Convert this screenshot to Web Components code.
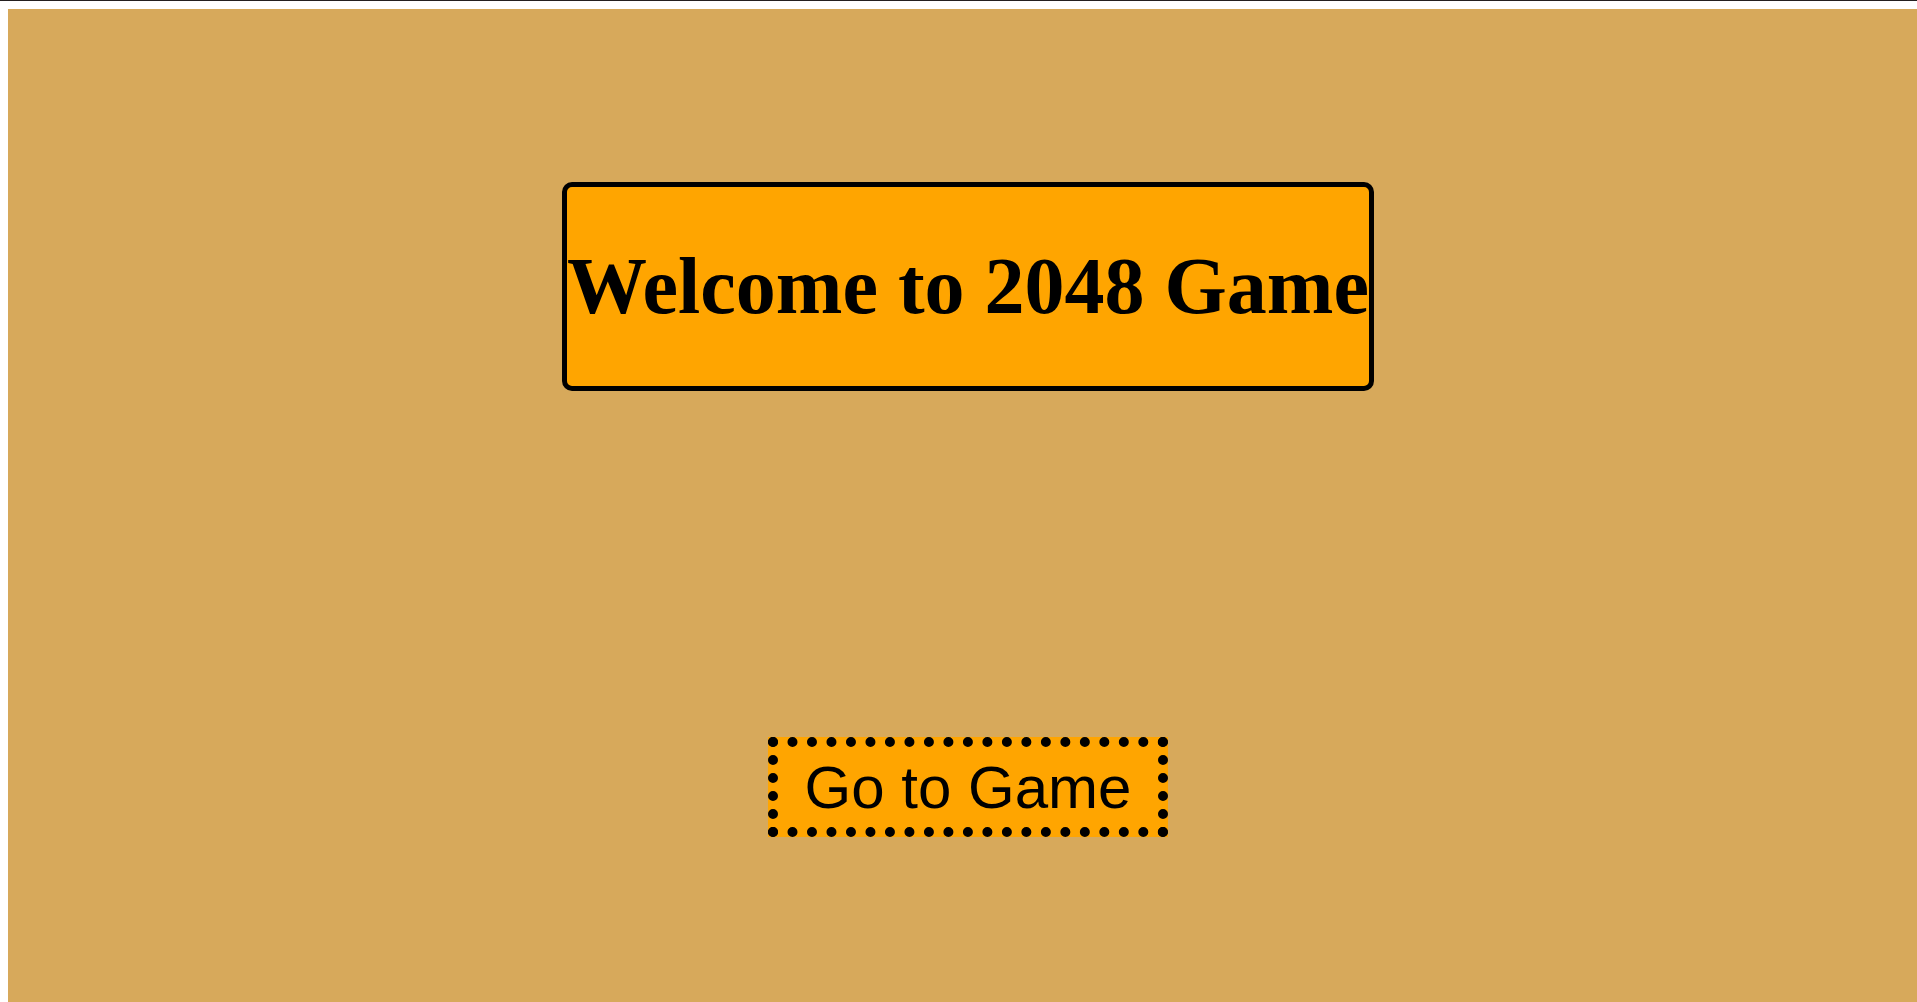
<!DOCTYPE html>
<html lang="en">
<head>
<meta charset="utf-8">
<title>2048 Game</title>
<style>
html { background: #fff; height: 100%; overflow: hidden; }
body { margin: 0; height: 100%; }
</style>
</head>
<body>
<welcome-page>
  <game-title>Welcome to 2048 Game</game-title>
  <start-button>Go to Game</start-button>
</welcome-page>
<script>
class WelcomePage extends HTMLElement {
  constructor() {
    super();
    this.attachShadow({ mode: "open" }).innerHTML = `
      <style>
        :host { display: block; box-sizing: border-box; min-height: 100vh; border-top: 1px solid #231f20; padding: 8px 0 0 8px; color: #000; }
        main { display: flex; flex-direction: column; align-items: center; gap: 346px; box-sizing: border-box; width: calc(100vw + 3px); min-height: calc(100vh - 9px); padding-top: 173px; background: #d7a95b; }
      </style>
      <main><slot></slot></main>`;
  }
}
class GameTitle extends HTMLElement {
  constructor() {
    super();
    this.attachShadow({ mode: "open" }).innerHTML = `
      <style>
        :host { display: flow-root; border: 5px solid #000; border-radius: 10px; background: #ffa500; }
        h1 { margin: 53px 0 54px; font: bold 80px/92px "Liberation Serif", serif; white-space: nowrap; }
      </style>
      <h1><slot></slot></h1>`;
  }
}
class StartButton extends HTMLElement {
  constructor() {
    super();
    this.attachShadow({ mode: "open" }).innerHTML = `
      <style>
        :host { display: block; }
        button { display: block; box-sizing: border-box; width: 400px; height: 100px; padding: 0; border: 10px dotted #000; background: #ffa500; color: #000; font: 60px "Liberation Sans", Arial, sans-serif; cursor: pointer; }
      </style>
      <button type="button"><slot></slot></button>`;
  }
}
customElements.define("welcome-page", WelcomePage);
customElements.define("game-title", GameTitle);
customElements.define("start-button", StartButton);
</script>
</body>
</html>
